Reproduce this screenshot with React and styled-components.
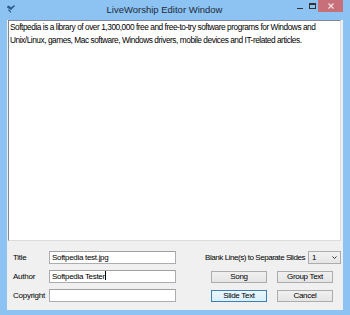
import React from 'react';
import styled, { createGlobalStyle } from 'styled-components';

const GlobalStyle = createGlobalStyle`
  html, body {
    margin: 0;
    padding: 0;
    background: #8cc3f3;
  }
`;

const Window = styled.div`
  width: 350px;
  height: 315px;
  background: #8cc3f3;
  display: flex;
  flex-direction: column;
  font-family: "Liberation Sans", Arial, sans-serif;
  letter-spacing: -0.3px;
  overflow: hidden;
`;

const TitleBar = styled.div`
  height: 20px;
  display: flex;
  align-items: flex-start;
`;

const AppIcon = styled.svg`
  margin: 5px 0 0 7px;
`;

const Caption = styled.div`
  flex: 1;
  text-align: center;
  font-size: 9.5px;
  letter-spacing: 0;
  line-height: 20px;
  color: #1e2a38;
  padding-left: 20px;
`;

const Controls = styled.div`
  display: flex;
  align-items: flex-start;
  margin-right: 7px;
`;

const CtrlButton = styled.div`
  width: ${(p) => p.$w}px;
  height: 12px;
  display: flex;
  align-items: center;
  justify-content: center;
  background: ${(p) => (p.$close ? '#c8707a' : 'transparent')};
`;

const Client = styled.div`
  flex: 1;
  margin: 0 7px 5px 7px;
  background: #f0f0f0;
  display: flex;
  flex-direction: column;
`;

const Editor = styled.div`
  height: 219px;
  margin: 0 2px 0 1px;
  background: #fff;
  border: 1px solid #828790;
  border-right-color: #dcdcdc;
  border-bottom-color: #dcdcdc;
  padding: 0 1px;
  font-size: 8.3px;
  letter-spacing: -0.45px;
  line-height: 13px;
  color: #000;
`;

const Form = styled.div`
  display: grid;
  grid-template-columns: 36px 127px 1fr;
  grid-auto-rows: 13px;
  row-gap: 6px;
  padding: 10px 0 0 6px;
`;

const Label = styled.div`
  font-size: 8px;
  letter-spacing: ${(p) => (p.$tight ? '-0.45px' : '-0.25px')};
  line-height: 13px;
  color: #000;
  white-space: nowrap;
`;

const TextInput = styled.div`
  height: 13px;
  box-sizing: border-box;
  border: 1px solid #abadb3;
  border-top-color: #a0a0a0;
  background: #fff;
  font-size: 8px;
  line-height: 11px;
  padding: 0 2px;
  color: #000;
  white-space: nowrap;
`;

const Caret = styled.span`
  display: inline-block;
  width: 1px;
  height: 9px;
  background: #000;
  vertical-align: -1px;
`;

const RightCell = styled.div`
  display: flex;
  align-items: center;
  justify-content: ${(p) => (p.$end ? 'flex-end' : 'flex-start')};
  gap: ${(p) => (p.$end ? 3 : 10)}px;
  padding: ${(p) => (p.$end ? '0 2px 0 0' : '0 0 0 35px')};
`;

const Select = styled.div`
  width: 33px;
  height: 13px;
  box-sizing: border-box;
  border: 1px solid #acacac;
  background: linear-gradient(#f2f2f2, #e5e5e5);
  display: flex;
  align-items: center;
  justify-content: space-between;
  padding: 0 3px;
  font-size: 8px;
`;

const Button = styled.div`
  width: 56px;
  height: 12px;
  box-sizing: border-box;
  border: 1px solid ${(p) => (p.$default ? '#3c7fb1' : '#acacac')};
  background: ${(p) =>
    p.$default ? 'linear-gradient(#eaf6fd, #d9f0fc)' : 'linear-gradient(#f0f0f0, #e5e5e5)'};
  font-size: 8px;
  line-height: 10px;
  text-align: center;
  color: #000;
`;

export default function App() {
  return (
    <>
      <GlobalStyle />
      <Window>
        <TitleBar>
          <AppIcon width="8" height="8" viewBox="0 0 8 8">
            <path d="M0 2.5 C0 0.5 2 0 3 1.5 L4 2.5 L7 0 L8 1 L4 5 Z" fill="#2b5a8c" />
            <path d="M1.5 4 L4 6.5 L4 8 L1.5 5.5 Z" fill="#1d4673" />
          </AppIcon>
          <Caption>LiveWorship Editor Window</Caption>
          <Controls>
            <CtrlButton $w={12}>
              <svg width="7" height="7" viewBox="0 0 7 7">
                <rect x="0" y="5" width="6" height="1" fill="#333" />
              </svg>
            </CtrlButton>
            <CtrlButton $w={12}>
              <svg width="7" height="7" viewBox="0 0 7 7">
                <rect x="0.5" y="0.5" width="6" height="5" fill="none" stroke="#333" />
                <rect x="0" y="0" width="7" height="2" fill="#333" />
              </svg>
            </CtrlButton>
            <CtrlButton $w={25} $close>
              <svg width="6" height="6" viewBox="0 0 6 6">
                <path d="M0.5 0.5 L5.5 5.5 M5.5 0.5 L0.5 5.5" stroke="#f4e4e6" strokeWidth="1.1" />
              </svg>
            </CtrlButton>
          </Controls>
        </TitleBar>
        <Client>
          <Editor>
            Softpedia is a library of over 1,300,000 free and free-to-try software programs for Windows and
            Unix/Linux, games, Mac software, Windows drivers, mobile devices and IT-related articles.
          </Editor>
          <Form>
            <Label>Title</Label>
            <TextInput>Softpedia test.jpg</TextInput>
            <RightCell $end>
              <Label $tight>Blank Line(s) to Separate Slides</Label>
              <Select>
                <span>1</span>
                <svg width="5" height="3" viewBox="0 0 5 3">
                  <path d="M0.5 0.5 L2.5 2.5 L4.5 0.5" fill="none" stroke="#333" />
                </svg>
              </Select>
            </RightCell>
            <Label>Author</Label>
            <TextInput>
              Softpedia Tester<Caret />
            </TextInput>
            <RightCell>
              <Button>Song</Button>
              <Button>Group Text</Button>
            </RightCell>
            <Label>Copyright</Label>
            <TextInput />
            <RightCell>
              <Button $default>Slide Text</Button>
              <Button>Cancel</Button>
            </RightCell>
          </Form>
        </Client>
      </Window>
    </>
  );
}
